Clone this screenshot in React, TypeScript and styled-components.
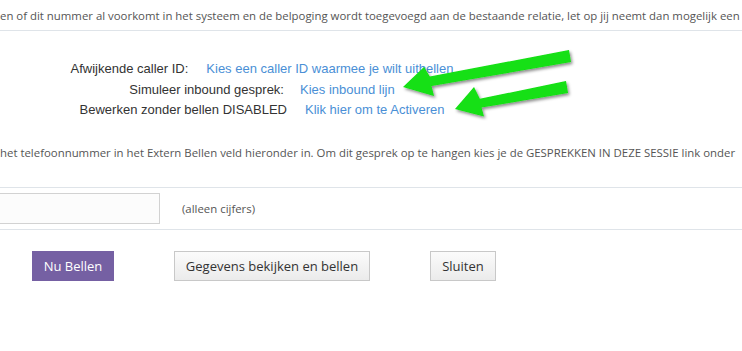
import React from 'react';
import styled, { createGlobalStyle } from 'styled-components';

const colors = {
  text: '#555',
  dark: '#333',
  link: '#4a8fd6',
  line: '#dfe4e9',
  purple: '#7560a3',
  arrow: '#12e012',
};

const Global = createGlobalStyle`
  html, body {
    margin: 0;
    padding: 0;
    background: #fff;
    overflow: hidden;
  }
`;

const Page = styled.div`
  position: relative;
  width: 742px;
  height: 351px;
  overflow: hidden;
`;

const Note = styled.div<{ $top: number }>`
  font-family: 'Open Sans', sans-serif;
  font-size: 11.4px;
  color: ${colors.text};
  white-space: nowrap;
  line-height: 16px;
  padding-top: ${(p) => p.$top}px;
`;

const Divider = styled.div`
  height: 1px;
  margin-top: 6px;
  background: ${colors.line};
`;

const Options = styled.div`
  width: 524px;
  padding-top: 28px;
  text-align: center;
  font-family: 'Liberation Sans', Arial, sans-serif;
  font-size: 13px;
  line-height: 20.5px;
  color: ${colors.dark};
`;

const OptionLine = styled.div`
  white-space: nowrap;
`;

const Link = styled.a<{ $gap: number }>`
  color: ${colors.link};
  text-decoration: none;
  margin-left: ${(p) => p.$gap}px;
  cursor: pointer;
`;

const InputRow = styled.div`
  display: flex;
  align-items: center;
  gap: 22px;
  padding: 5px 0;
  margin-top: 26px;
  border-top: 1px solid ${colors.line};
  border-bottom: 1px solid ${colors.line};
`;

const NumberInput = styled.input`
  box-sizing: border-box;
  width: 172px;
  height: 31px;
  margin-left: -12px;
  border: 1px solid #d2d2d2;
  background: #fcfcfc;
  outline: none;
`;

const Hint = styled.span`
  font-family: 'Open Sans', sans-serif;
  font-size: 11.4px;
  color: ${colors.text};
`;

const Buttons = styled.div`
  display: flex;
  gap: 60px;
  padding: 21px 0 0 32px;
`;

const Button = styled.button<{ $primary?: boolean; $w: number }>`
  box-sizing: border-box;
  width: ${(p) => p.$w}px;
  height: 30px;
  padding: 0;
  font-family: 'Open Sans', sans-serif;
  font-size: 13px;
  color: ${(p) => (p.$primary ? '#fff' : colors.dark)};
  background: ${(p) => (p.$primary ? colors.purple : 'linear-gradient(#fbfbfb, #ebebeb)')};
  border: ${(p) => (p.$primary ? 'none' : '1px solid #c8c8c8')};
  cursor: pointer;
`;

const Overlay = styled.svg`
  position: absolute;
  left: 0;
  top: 0;
  pointer-events: none;
`;

function Arrows() {
  return (
    <Overlay width={742} height={351}>
      <defs>
        <filter id="sh" x="-10%" y="-30%" width="130%" height="180%">
          <feDropShadow dx="1.5" dy="2" stdDeviation="1.6" floodColor="#000" floodOpacity="0.45" />
        </filter>
      </defs>
      <polygon
        filter="url(#sh)"
        fill={colors.arrow}
        points="403,87 434,96 431.5,86 571,62 569,50 429.8,76.5 424,67"
      />
      <polygon
        filter="url(#sh)"
        fill={colors.arrow}
        points="455,109 484,116.5 481.5,107.5 568,93 566,81 479.8,98.8 474,87"
      />
    </Overlay>
  );
}

export default function App() {
  return (
    <Page>
      <Global />
      <Note $top={8}>
        en of dit nummer al voorkomt in het systeem en de belpoging wordt toegevoegd aan de bestaande relatie, let op jij neemt dan mogelijk een
      </Note>
      <Divider />
      <Options>
        <OptionLine>
          Afwijkende caller ID:<Link $gap={18}>Kies een caller ID waarmee je wilt uitbellen</Link>
        </OptionLine>
        <OptionLine>
          Simuleer inbound gesprek:<Link $gap={16}>Kies inbound lijn</Link>
        </OptionLine>
        <OptionLine>
          Bewerken zonder bellen DISABLED<Link $gap={18}>Klik hier om te Activeren</Link>
        </OptionLine>
      </Options>
      <Note $top={24}>
        het telefoonnummer in het Extern Bellen veld hieronder in. Om dit gesprek op te hangen kies je de GESPREKKEN IN DEZE SESSIE link onder
      </Note>
      <InputRow>
        <NumberInput type="text" />
        <Hint>(alleen cijfers)</Hint>
      </InputRow>
      <Buttons>
        <Button $primary $w={82}>Nu Bellen</Button>
        <Button $w={196}>Gegevens bekijken en bellen</Button>
        <Button $w={66}>Sluiten</Button>
      </Buttons>
      <Arrows />
    </Page>
  );
}
